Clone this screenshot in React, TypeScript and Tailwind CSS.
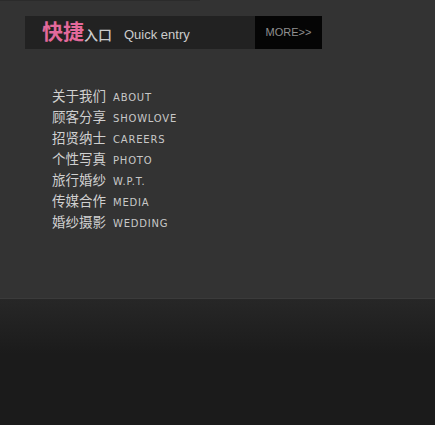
const links = [
  { cn: "关于我们", en: "ABOUT" },
  { cn: "顾客分享", en: "SHOWLOVE" },
  { cn: "招贤纳士", en: "CAREERS" },
  { cn: "个性写真", en: "PHOTO" },
  { cn: "旅行婚纱", en: "W.P.T." },
  { cn: "传媒合作", en: "MEDIA" },
  { cn: "婚纱摄影", en: "WEDDING" },
];

export default function App() {
  return (
    <div className="w-[435px] h-[425px] flex flex-col bg-[#333333] font-['Liberation_Sans','Noto_Sans_CJK_SC',sans-serif]">
      <div className="h-[298px] flex flex-col">
        <div className="h-px w-[200px] bg-[#2b2b2b]" />
        <div className="mt-[15px] ml-[25px] flex h-[33px] w-[297px]">
          <div className="flex-1 bg-[#222222] flex items-end pl-[17px] pb-[4px]">
            <span className="text-[21px] leading-[26px] font-bold text-[#e3699b]">快捷</span>
            <span className="text-[14px] leading-[20px] font-medium text-[#cccccc]">入口</span>
            <span className="ml-[12px] text-[13px] leading-[20px] text-[#cccccc]">Quick entry</span>
          </div>
          <div className="w-[67px] bg-[#050505] flex items-center justify-center text-[11px] text-[#909090]">MORE&gt;&gt;</div>
        </div>
        <ul className="mt-[38px] ml-[52px] flex flex-col">
          {links.map((l) => (
            <li key={l.en} className="flex items-center h-[21px]">
              <span className="text-[13.5px] text-[#d0d0d0]">{l.cn}</span>
              <span className="ml-[7px] text-[10px] tracking-[0.8px] text-[#c8c8c8] font-['DejaVu_Sans',sans-serif]">{l.en}</span>
            </li>
          ))}
        </ul>
      </div>
      <div className="h-px bg-[#3b3b3b]" />
      <div className="flex-1 bg-[linear-gradient(to_bottom,#272727_0px,#1b1b1b_55px,#1b1b1b_100%)]" />
    </div>
  );
}
